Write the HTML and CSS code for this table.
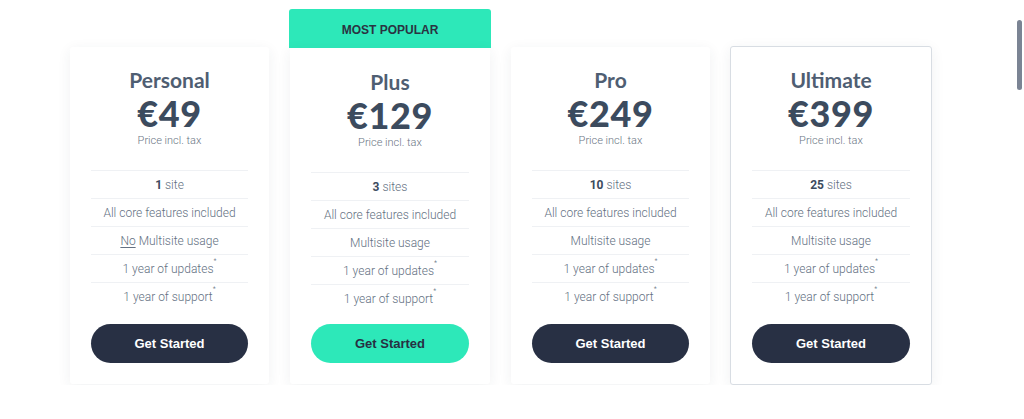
FILE: index.html
```html
<!DOCTYPE html>
<html lang="en">
<head>
<meta charset="utf-8">
<title>Pricing</title>
<link rel="stylesheet" href="styles.css">
</head>
<body>
<main class="pricing">
  <section class="card">
    <h2 class="title">Personal</h2>
    <div class="price">€49</div>
    <div class="note">Price incl. tax</div>
    <ul class="features">
      <li><b>1</b> site</li>
      <li>All core features included</li>
      <li><u>No</u> Multisite usage</li>
      <li>1 year of updates<sup>*</sup></li>
      <li>1 year of support<sup>*</sup></li>
    </ul>
    <a class="btn" href="#">Get Started</a>
  </section>
  <section class="card-wrap">
    <div class="badge">MOST POPULAR</div>
    <div class="card card--popular">
      <h2 class="title">Plus</h2>
      <div class="price">€129</div>
      <div class="note">Price incl. tax</div>
      <ul class="features">
        <li><b>3</b> sites</li>
        <li>All core features included</li>
        <li>Multisite usage</li>
        <li>1 year of updates<sup>*</sup></li>
        <li>1 year of support<sup>*</sup></li>
      </ul>
      <a class="btn btn--green" href="#">Get Started</a>
    </div>
  </section>
  <section class="card">
    <h2 class="title">Pro</h2>
    <div class="price">€249</div>
    <div class="note">Price incl. tax</div>
    <ul class="features">
      <li><b>10</b> sites</li>
      <li>All core features included</li>
      <li>Multisite usage</li>
      <li>1 year of updates<sup>*</sup></li>
      <li>1 year of support<sup>*</sup></li>
    </ul>
    <a class="btn" href="#">Get Started</a>
  </section>
  <section class="card card--bordered">
    <h2 class="title">Ultimate</h2>
    <div class="price">€399</div>
    <div class="note">Price incl. tax</div>
    <ul class="features">
      <li><b>25</b> sites</li>
      <li>All core features included</li>
      <li>Multisite usage</li>
      <li>1 year of updates<sup>*</sup></li>
      <li>1 year of support<sup>*</sup></li>
    </ul>
    <a class="btn" href="#">Get Started</a>
  </section>
</main>
<div class="scrollbar"></div>
</body>
</html>
```
FILE: styles.css
```css
html, body {
  margin: 0;
  padding: 0;
  background: #ffffff;
  overflow: hidden;
}

.pricing {
  display: flex;
  align-items: flex-start;
  gap: 21px;
  padding: 9px 0 0 70px;
}

.card {
  box-sizing: border-box;
  width: 199px;
  margin-top: 38px;
  padding: 20px 21px 21px;
  background: #fff;
  border-radius: 3px;
  box-shadow: 0 3px 14px rgba(40, 50, 70, 0.07);
  display: flex;
  flex-direction: column;
  align-items: stretch;
  text-align: center;
}

.card-wrap {
  width: 200px;
  display: flex;
  flex-direction: column;
  align-items: center;
}

.badge {
  box-sizing: border-box;
  width: 202px;
  height: 39px;
  margin: 0 -1px;
  padding-top: 3px;
  background: #2de8b9;
  border-radius: 3px 3px 0 0;
  color: #2a3342;
  font-family: "Liberation Sans", Arial, sans-serif;
  font-weight: 700;
  font-size: 12px;
  letter-spacing: 0;
  display: flex;
  align-items: center;
  justify-content: center;
}

.card--popular {
  width: 200px;
  margin-top: 0;
  padding-top: 21px;
  padding-bottom: 21px;
  border-radius: 0 0 3px 3px;
}

.card--bordered {
  width: 202px;
  margin-top: 37px;
  margin-left: -1px;
  border: 1px solid #d8dde3;
}

.title {
  margin: 0;
  font-family: Lato, "Open Sans", sans-serif;
  font-weight: 700;
  font-size: 21px;
  line-height: 26px;
  color: #4f5e72;
}

.price {
  margin-top: 1px;
  font-family: Lato, "Open Sans", sans-serif;
  font-weight: 900;
  font-size: 36px;
  line-height: 38px;
  letter-spacing: 0.6px;
  color: #3c4b5e;
}

.note {
  margin-top: 1px;
  font-family: Roboto, "Liberation Sans", sans-serif;
  font-weight: 300;
  font-size: 11px;
  line-height: 16px;
  color: #6a7584;
}

.features {
  list-style: none;
  margin: 21px 0 0;
  padding: 0;
}

.features li {
  height: 28px;
  border-top: 1px solid #eff1f4;
  box-sizing: border-box;
  display: flex;
  align-items: center;
  justify-content: center;
  font-family: Roboto, "Liberation Sans", sans-serif;
  font-weight: 300;
  font-size: 12px;
  color: #637082;
}

.features b {
  font-weight: 700;
  color: #3c4b5e;
  margin-right: 3px;
}

.features u {
  text-decoration-thickness: 1px;
  text-underline-offset: 2px;
  margin-right: 3px;
}

.features sup {
  font-size: 7px;
  line-height: 0;
  color: #637082;
  align-self: flex-start;
  margin-top: 6px;
}

.btn {
  margin-top: 14px;
  height: 39px;
  border-radius: 20px;
  background: #283044;
  color: #ffffff;
  font-family: "Liberation Sans", Arial, sans-serif;
  font-weight: 700;
  font-size: 13px;
  text-decoration: none;
  display: flex;
  align-items: center;
  justify-content: center;
}

.btn--green {
  margin-top: 12px;
  background: #2de8b9;
  color: #273043;
}

.scrollbar {
  position: fixed;
  top: 20px;
  right: 2px;
  width: 5px;
  height: 70px;
  border-radius: 3px;
  background: #7b8494;
}
```
